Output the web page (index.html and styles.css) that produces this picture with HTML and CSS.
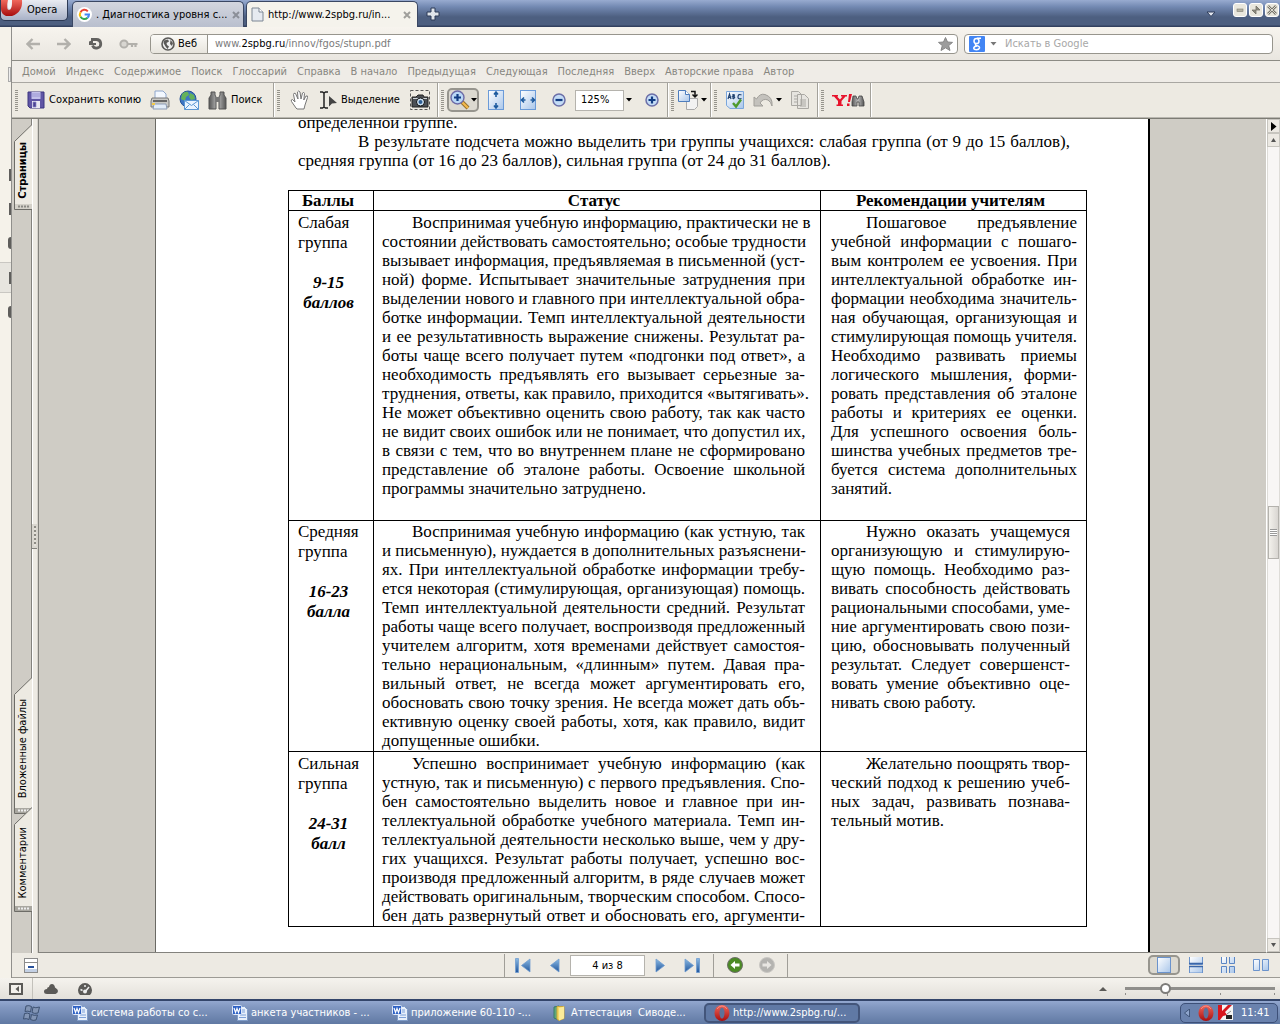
FILE: index.html
```html
<!DOCTYPE html>
<html lang="ru">
<head>
<meta charset="utf-8">
<meta name="viewport" content="width=device-width, initial-scale=1">
<title>http://www.2spbg.ru/innov/fgos/stupn.pdf</title>
<link rel="stylesheet" href="styles.css">
</head>
<body>
<svg class="defs" aria-hidden="true">
  <defs>
    <linearGradient id="gBlue" x1="0" y1="0" x2="1" y2="1"><stop offset="0" stop-color="#fff"/><stop offset="1" stop-color="#a9c6ea"/></linearGradient>
    <linearGradient id="gNav" x1="0" y1="0" x2="0" y2="1"><stop offset="0" stop-color="#8cbbe4"/><stop offset="1" stop-color="#1f549b"/></linearGradient>
    <linearGradient id="gGrey" x1="0" y1="0" x2="1" y2="0"><stop offset="0" stop-color="#555"/><stop offset=".5" stop-color="#bbb"/><stop offset="1" stop-color="#555"/></linearGradient>
    <linearGradient id="gRed" x1="0" y1="0" x2="0" y2="1"><stop offset="0" stop-color="#f0685c"/><stop offset="1" stop-color="#a80d0d"/></linearGradient>
    <symbol id="word" viewBox="0 0 16 16"><path d="M5.500 1.500h7l3 3v11h-10z" fill="#e8f0fb" stroke="#7f9cc8"/><path d="M8 5h5M8 7h5M8 10h6M7 12.500h7" stroke="#7da0d8"/><rect x=".5" y=".5" width="9" height="9" rx="1" fill="#2f62c4" stroke="#dfe9fa"/><path d="M2 3l1.500 4.500L5 3.500l1.500 4L8 3" fill="none" stroke="#fff" stroke-width="1.200"/></symbol>
    <symbol id="opera" viewBox="0 0 16 16"><ellipse cx="8" cy="8" rx="7.500" ry="8" fill="url(#gRed)"/><ellipse cx="8" cy="8" rx="2.500" ry="5.500" fill="#5d7199"/><path d="M3 4q2-3 5-3t5 3" stroke="#ff9a90" fill="none" opacity=".7"/></symbol>
    <symbol id="caret" viewBox="0 0 6 4"><path d="M0 0h6L3 3.500z" fill="currentColor"/></symbol>
  </defs>
</svg>
<div class="app">
  <header class="titlebar">
    <button class="opera-btn" type="button">
      <svg width="22" height="16" viewBox="0 0 22 16"><path d="M0 0h7q-2 10 1 10T11 0h10q1 12-10 16H5Q0 14 0 9z" fill="url(#gRed)"/><path d="M7 0q-1 9 1.500 9T11 0z" fill="#f4f4f6"/></svg>
      <span>Opera</span>
    </button>
    <div class="tab">
      <svg width="15" height="15" viewBox="0 0 15 15"><circle cx="7.500" cy="7.500" r="7.500" fill="#fff"/><g fill="none" stroke-width="2"><path d="M3.500 5.200A4.500 4.500 0 0 1 10.800 4.300" stroke="#ea4335"/><path d="M3.500 5.200a4.500 4.500 0 0 0 0 4.600" stroke="#fbbc05"/><path d="M3.500 9.800a4.500 4.500 0 0 0 7 1" stroke="#34a853"/><path d="M10.500 10.800Q12 9.500 12 7.600H7.600" stroke="#4285f4"/></g></svg>
      <a class="tab-text" href="#">. Диагностика уровня с...</a>
      <button class="tab-close" type="button" aria-label="Закрыть вкладку"><svg width="8" height="8" viewBox="0 0 8 8"><path d="M1 1l6 6M7 1L1 7" stroke="#8b8f98" stroke-width="2"/></svg></button>
    </div>
    <div class="tab tab-active">
      <svg width="13" height="15" viewBox="0 0 13 15"><path d="M1 1h7l4 4v9H1z" fill="#e6eaf0" stroke="#7d8794"/><path d="M8 1v4h4" fill="#fff" stroke="#7d8794"/></svg>
      <a class="tab-text" href="#">http://www.2spbg.ru/in...</a>
      <button class="tab-close" type="button" aria-label="Закрыть вкладку"><svg width="8" height="8" viewBox="0 0 8 8"><path d="M1 1l6 6M7 1L1 7" stroke="#a09f9b" stroke-width="2"/></svg></button>
    </div>
    <button class="plain new-tab" type="button" aria-label="Новая вкладка"><svg width="14" height="14" viewBox="0 0 14 14"><path d="M5 1h4v4h4v4H9v4H5V9H1V5h4z" fill="#dfe4ea" stroke="#2d3b56"/></svg></button>
    <button class="plain tab-menu" type="button" aria-label="Список вкладок"><svg width="10" height="7" viewBox="0 0 10 7"><path d="M1 1h8L5 5.500z" fill="#e3e7ef" stroke="#2f3d5a"/></svg></button>
    <div class="win-buttons">
      <button type="button" aria-label="Свернуть"><svg width="12" height="12" viewBox="0 0 12 12"><rect x="3" y="5" width="6" height="2.500" fill="#b5b3a4" stroke="#7e7c70" stroke-width=".6"/></svg></button>
      <button type="button" aria-label="Восстановить"><svg width="12" height="12" viewBox="0 0 12 12"><path d="M6 2v4h4zM6 10V6H2zM6 2l4 4M2 6l4 4" fill="#8d8b7e" stroke="#77756b" stroke-width=".8"/></svg></button>
      <button type="button" aria-label="Закрыть"><svg width="12" height="12" viewBox="0 0 12 12"><path d="M2 2l8 8M10 2l-8 8" stroke="#77756b" stroke-width="2.600"/><path d="M2 2l8 8M10 2l-8 8" stroke="#dcdad0"/></svg></button>
    </div>
  </header>

  <div class="middle">
    <aside class="sliver">
      <i class="nub nub-first"></i><i class="nub"></i><i class="nub"></i><i class="nub round"></i><span class="sliver-sel"><i class="nub"></i></span><i class="nub round"></i>
    </aside>
    <main class="window">
      <nav class="navbar">
        <button class="plain" type="button" aria-label="Назад"><svg width="14" height="12" viewBox="0 0 14 12"><path d="M6.500 1L1.500 6l5 5M2 6h12" fill="none" stroke="#b2b0ab" stroke-width="2.400"/></svg></button>
        <button class="plain" type="button" aria-label="Вперёд"><svg width="14" height="12" viewBox="0 0 14 12"><path d="M7.500 1l5 5-5 5M12 6H0" fill="none" stroke="#b2b0ab" stroke-width="2.400"/></svg></button>
        <button class="plain reload" type="button" aria-label="Обновить"><svg width="14" height="14" viewBox="0 0 14 14"><path d="M2 2.500h5.500a4.300 4.300 0 1 1-4 6" fill="none" stroke="#636260" stroke-width="2.800"/><path d="M0 8V4.500L4 3v3h3v2z" fill="#636260"/></svg></button>
        <button class="plain key" type="button" aria-label="Пароли"><svg width="19" height="10" viewBox="0 0 19 10"><circle cx="5" cy="5" r="3.600" fill="#d8d6d1" stroke="#b2b0ab" stroke-width="2"/><path d="M9 5h9.500M13 5v3M16.500 5v3" stroke="#b2b0ab" stroke-width="2.200" fill="none"/></svg></button>
        <div class="address">
          <button class="badge" type="button"><svg width="14" height="14" viewBox="0 0 14 14"><circle cx="7" cy="7" r="6" fill="#eee" stroke="#5a5957" stroke-width="1.600"/><path d="M3 3.500L7 2.500l1 2L5.500 6 6 8l2 1.500L6.500 12 4.500 9.500 2.500 6zM9.500 3l2.500 3-1 3-2-2z" fill="#5a5957"/></svg><span>Веб</span></button>
          <div class="url" role="textbox" contenteditable="true" aria-label="Адрес" spellcheck="false">www.<b>2spbg.ru</b>/innov/fgos/stupn.pdf</div>
          <button class="plain star" type="button" aria-label="Закладка"><svg width="15" height="14" viewBox="0 0 15 14"><path d="M7.500.5l2 4.500 5 .4-3.800 3.200L12 13.500l-4.500-2.700L3 13.500l1.300-4.900L.5 5.400l5-.4z" fill="#9c9c9c" stroke="#858585"/></svg></button>
        </div>
        <div class="search">
          <svg width="16" height="16" viewBox="0 0 16 16"><rect width="16" height="16" rx="1" fill="#4285f4"/><g fill="none" stroke="#fff" stroke-width="1.500"><ellipse cx="7.500" cy="5" rx="2.500" ry="2.600"/><path d="M8 2.300h4M7 7.600q-1.500 1.400 1 2 2.800.8 2.500 2.400-.5 1.700-3 1.700t-2.800-1.600Q5 10.300 8 10"/></g></svg>
          <svg class="search-caret" width="7" height="4"><use href="#caret"/></svg>
          <input type="text" aria-label="Искать в Google" placeholder="Искать в Google">
        </div>
      </nav>

      <nav class="links">
        <a href="#">Домой</a><a href="#">Индекс</a><a href="#">Содержимое</a><a href="#">Поиск</a><a href="#">Глоссарий</a><a href="#">Справка</a><a href="#">В начало</a><a href="#">Предыдущая</a><a href="#">Следующая</a><a href="#">Последняя</a><a href="#">Вверх</a><a href="#">Авторские права</a><a href="#">Автор</a>
      </nav>

      <div class="toolbar">
        <div class="group g-file">
          <button class="tool" type="button"><svg width="18" height="18" viewBox="0 0 18 18"><path d="M1 1h16v16H3l-2-2z" fill="#5f55a5" stroke="#3d3680"/><path d="M4.500 1h9v7h-9z" fill="#c3c0ea"/><path d="M5 10h8v7H5z" fill="#e8e8f2"/><path d="M6 11h3v5H6zM5 3h8M5 5h8" fill="#4a4292" stroke="#8a85c8" stroke-width=".7"/></svg><span>Сохранить копию</span></button>
          <button class="tool" type="button" aria-label="Печать"><svg width="20" height="20" viewBox="0 0 20 20"><path d="M5 8V1h8l3 3v4" fill="#f3f8ff" stroke="#8ea6cc"/><path d="M2 8h16l1 3v6H1v-6z" fill="#c9c9c6" stroke="#777"/><path d="M3 10h14v2H3z" fill="#666"/><path d="M4 14h12l1 5H3z" fill="#e2ecf8" stroke="#8d9cb5"/><path d="M2 13h3v2H2z" fill="#f3c94a"/></svg></button>
          <button class="tool" type="button" aria-label="Отправить"><svg width="20" height="20" viewBox="0 0 20 20"><circle cx="9" cy="9" r="8" fill="#3d75c4" stroke="#265296"/><path d="M3 4q3-3 6-2l1 3-3 2-1 4-4-2zM11 3l4 2 1 4-4 1-2-3z" fill="#64b25a"/><path d="M5.500 10.500h14v9h-14z" fill="#eaf4ff" stroke="#5c97d3"/><path d="M5.500 10.500l7 5 7-5M5.500 19.500l5-5M19.500 19.500l-5-5" fill="none" stroke="#5c97d3"/></svg></button>
          <button class="tool" type="button"><svg width="19" height="19" viewBox="0 0 19 19"><path d="M3 1h4v3l1 2v12H1V7l2-3zM12 1h4v3l2 3v11h-7V6l1-2z" fill="url(#gGrey)" stroke="#555"/><path d="M8 6h3v5H8z" fill="#777"/></svg><span>Поиск</span></button>
        </div>
        <div class="group g-select">
          <button class="tool" type="button" aria-label="Рука"><svg width="19" height="20" viewBox="0 0 19 20"><path d="M6 18L1.500 11.500q-1-2 1-2L5 12 3.500 4.500q0-2 2-1L8 9 7.500 2q1-2 2.500 0l1 7 1.500-6q1.500-1.500 2 .5L13.800 10l2.200-4q2-.8 1.500 1.500L15 15l-1 4H7z" fill="#fff" stroke="#777"/></svg></button>
          <button class="tool" type="button"><svg width="18" height="18" viewBox="0 0 18 18"><path d="M1 1h2.500l1.500 1 1.500-1H9M5 2v14M1 17h2.500L5 16l1.500 1H9" fill="none" stroke="#222" stroke-width="1.500"/><path d="M10 5l8 7-5 .500-3 3z" fill="#444"/></svg><span>Выделение</span></button>
          <button class="tool" type="button" aria-label="Снимок"><svg width="20" height="20" viewBox="0 0 20 20"><rect x=".5" y=".5" width="19" height="19" fill="none" stroke="#555" stroke-dasharray="3 2"/><path d="M2 7h4l2-2h5l1 2h4v10H2z" fill="#4b4f55" stroke="#222"/><path d="M3 8h14v1H3z" fill="#cdd3da"/><circle cx="10.500" cy="12" r="4" fill="#cfe3f5" stroke="#111"/><circle cx="10.500" cy="12" r="2" fill="#2f5f94"/></svg></button>
        </div>
        <div class="group g-zoom">
          <button class="tool pressed" type="button" aria-label="Увеличение"><svg width="20" height="20" viewBox="0 0 20 20"><path d="M12 12l6 6" stroke="#8d6a28" stroke-width="4"/><path d="M12 12l6 6" stroke="#f2b84c" stroke-width="2.400"/><circle cx="7.500" cy="7.500" r="6.500" fill="#b9d7f5" stroke="#6c6aa6" stroke-width="1.400"/><path d="M7.500 4v7M4 7.500h7" stroke="#123c83" stroke-width="2.200"/></svg><svg width="6" height="4"><use href="#caret"/></svg></button>
          <button class="tool" type="button" aria-label="По высоте"><svg width="16" height="20" viewBox="0 0 16 20"><rect x=".5" y=".5" width="15" height="19" fill="url(#gBlue)" stroke="#6b9bd8"/><path d="M8 2v5M8 18v-5M6 4.500l2-2.500 2 2.500M6 15.500L8 18l2-2.500" fill="none" stroke="#1d5a9e" stroke-width="1.600"/></svg></button>
          <button class="tool" type="button" aria-label="По ширине"><svg width="16" height="20" viewBox="0 0 16 20"><rect x=".5" y=".5" width="15" height="19" fill="url(#gBlue)" stroke="#6b9bd8"/><path d="M1.500 10h4M14.500 10h-4M4 7.500L1.500 10 4 12.500M12 7.500l2.500 2.500-2.500 2.500" fill="none" stroke="#1d5a9e" stroke-width="1.600"/></svg></button>
          <button class="tool" type="button" aria-label="Уменьшить"><svg width="14" height="14" viewBox="0 0 14 14"><circle cx="7" cy="7" r="6" fill="#c4dcf6" stroke="#6c6fa8" stroke-width="1.500"/><path d="M3.500 7h7" stroke="#123c83" stroke-width="2.200"/></svg></button>
          <div class="zoom-box"><input type="text" value="125%" aria-label="Масштаб"><button class="plain" type="button" aria-label="Выбрать масштаб"><svg width="6" height="4"><use href="#caret"/></svg></button></div>
          <button class="tool" type="button" aria-label="Увеличить"><svg width="14" height="14" viewBox="0 0 14 14"><circle cx="7" cy="7" r="6" fill="#c4dcf6" stroke="#6c6fa8" stroke-width="1.500"/><path d="M3.500 7h7M7 3.500v7" stroke="#123c83" stroke-width="2.200"/></svg></button>
        </div>
        <div class="group g-rotate">
          <button class="tool" type="button" aria-label="Повернуть"><svg width="20" height="20" viewBox="0 0 20 20"><path d="M8.500 8.500h11v8l-3 3h-8z" fill="#f2f2f2" stroke="#aaa"/><path d="M.5.500h7l4 4v7H.5z" fill="url(#gBlue)" stroke="#4d7dbd"/><path d="M7.500.5v4h4" fill="#fff" stroke="#4d7dbd"/><path d="M13 1.500h4V6M14.500 4.500L17 7l2.500-2.500" fill="none" stroke="#111" stroke-width="1.500"/></svg><svg width="6" height="4"><use href="#caret"/></svg></button>
        </div>
        <div class="group g-edit">
          <button class="tool" type="button" aria-label="Орфография"><svg width="18" height="18" viewBox="0 0 18 18"><path d="M.5.500h17v17H4l-3.500-3z" fill="url(#gBlue)" stroke="#7aa6dc"/><path d="M2 8l1.500-5L5 8M2.500 6.500h2M7 3v5M7 3.500q3 0 0 2 3.500 0 0 2.500M15.500 4q-3-1.500-3.500 1.500T15.500 7.500" fill="none" stroke="#1f416f" stroke-width="1.200"/><path d="M7 12l3 3.500 5-7" fill="none" stroke="#4f9a2c" stroke-width="2.400"/></svg></button>
          <button class="tool" type="button" aria-label="Отменить"><svg width="20" height="14" viewBox="0 0 20 14"><path d="M1 4v9h9L7 10q3-5 8-3 3 2 4 6 1-9-7-11.500Q7 0 3.500 6z" fill="#c4c2bd" stroke="#a19f9a"/></svg><svg width="6" height="4"><use href="#caret"/></svg></button>
          <button class="tool" type="button" aria-label="Копировать"><svg width="18" height="18" viewBox="0 0 18 18"><path d="M.5.500h7l3 3v11H.5zM6.500 3.500h7l4 4v10h-11z" fill="#e6e4df" stroke="#aaa8a3"/><path d="M3 5h3M3 8h3M3 11h3M9 9h6M9 11h6M9 13h6M9 15h6" stroke="#aaa8a3"/></svg></button>
        </div>
        <div class="group g-yahoo">
          <button class="tool" type="button" aria-label="Yahoo"><svg width="33" height="13" viewBox="0 0 33 13"><path d="M0 1h6v1.500H5L8 5.500l2.500-3H9V1h6v1.500h-1.500L9.500 7v3.500H11V12H4.500v-1.500H6V7L2 2.500H0zM17 0h3l-2 8h-2zM15 9.500h2.500V12H15z" fill="#e8132c"/><path d="M21 2h3l1 3h1l1-3h3l2 6v4h-5V8h-2v4h-5V8z" fill="url(#gGrey)" stroke="#444" stroke-width=".8"/></svg></button>
        </div>
      </div>

      <div class="viewer">
        <div class="rail">
          <button class="rail-tab rail-pages" type="button"><svg width="18" height="87" viewBox="0 0 18 87"><path d="M18 .5L.5 17.500V85.500H18" fill="#edeae2" stroke="#6d6c67"/><path d="M1 80h17v5H1z" fill="#d4d1c9"/><path d="M4 82.500h11" stroke="#8a8984" stroke-width="2" stroke-dasharray="2 1"/></svg><span>Страницы</span></button>
          <button class="rail-tab rail-files" type="button"><svg width="18" height="138" viewBox="0 0 18 138"><path d="M18 .5L.5 17.500V136.500H18" fill="#edeae2" stroke="#6d6c67"/><path d="M1 131h17v5H1z" fill="#a9a7a0"/><path d="M4 133.500h11" stroke="#eee" stroke-width="2" stroke-dasharray="2 1"/></svg><span>Вложенные файлы</span></button>
          <button class="rail-tab rail-comments" type="button"><svg width="18" height="106" viewBox="0 0 18 106"><path d="M18 .5L.5 17.500V104.500H18" fill="#edeae2" stroke="#6d6c67"/><path d="M1 99h17v5H1z" fill="#a9a7a0"/><path d="M4 101.500h11" stroke="#eee" stroke-width="2" stroke-dasharray="2 1"/></svg><span>Комментарии</span></button>
        </div>
        <div class="splitter"><i></i></div>
        <div class="canvas">
          <article class="page">
            <div class="intro">
              <p class="lines"><span>определенной группе.</span></p>
              <p class="lines"><span class="ind">В результате подсчета можно выделить три группы учащихся: слабая группа (от 9 до 15 баллов),</span><span>средняя группа (от 16 до 23 баллов), сильная группа (от 24 до 31 баллов).</span></p>
            </div>
            <table>
              <thead><tr><th class="c1">Баллы</th><th class="c2">Статус</th><th class="c3">Рекомендации учителям</th></tr></thead>
              <tbody>
                <tr class="r1">
                  <td class="c1"><p>Слабая<br>группа</p><p class="score">9-15<br>баллов</p></td>
                  <td class="c2"><p class="lines"><span class="ind">Воспринимая учебную информацию, практически не в</span><span>состоянии действовать самостоятельно; особые трудности</span><span>вызывает информация, предъявляемая в письменной (уст-</span><span>ной) форме. Испытывает значительные затруднения при</span><span>выделении нового и главного при интеллектуальной обра-</span><span>ботке информации. Темп интеллектуальной деятельности</span><span>и ее результативность выражение снижены. Результат ра-</span><span>боты чаще всего получает путем «подгонки под ответ», а</span><span>необходимость предъявлять его вызывает серьезные за-</span><span>труднения, ответы, как правило, приходится «вытягивать».</span><span>Не может объективно оценить свою работу, так как часто</span><span>не видит своих ошибок или не понимает, что допустил их,</span><span>в связи с тем, что во внутреннем плане не сформировано</span><span>представление об эталоне работы. Освоение школьной</span><span>программы значительно затруднено.</span></p></td>
                  <td class="c3 wide"><p class="lines"><span class="ind">Пошаговое предъявление</span><span>учебной информации с пошаго-</span><span>вым контролем ее усвоения. При</span><span>интеллектуальной обработке ин-</span><span>формации необходима значитель-</span><span>ная обучающая, организующая и</span><span>стимулирующая помощь учителя.</span><span>Необходимо развивать приемы</span><span>логического мышления, форми-</span><span>ровать представления об эталоне</span><span>работы и критериях ее оценки.</span><span>Для успешного освоения боль-</span><span>шинства учебных предметов тре-</span><span>буется система дополнительных</span><span>занятий.</span></p></td>
                </tr>
                <tr class="r2">
                  <td class="c1"><p>Средняя<br>группа</p><p class="score">16-23<br>балла</p></td>
                  <td class="c2"><p class="lines"><span class="ind">Воспринимая учебную информацию (как устную, так</span><span>и письменную), нуждается в дополнительных разъяснени-</span><span>ях. При интеллектуальной обработке информации требу-</span><span>ется некоторая (стимулирующая, организующая) помощь.</span><span>Темп интеллектуальной деятельности средний. Результат</span><span>работы чаще всего получает, воспроизводя предложенный</span><span>учителем алгоритм, хотя временами действует самостоя-</span><span>тельно нерациональным, «длинным» путем. Давая пра-</span><span>вильный ответ, не всегда может аргументировать его,</span><span>обосновать свою точку зрения. Не всегда может дать объ-</span><span>ективную оценку своей работы, хотя, как правило, видит</span><span>допущенные ошибки.</span></p></td>
                  <td class="c3"><p class="lines"><span class="ind">Нужно оказать учащемуся</span><span>организующую и стимулирую-</span><span>щую помощь. Необходимо раз-</span><span>вивать способность действовать</span><span>рациональными способами, уме-</span><span>ние аргументировать свою пози-</span><span>цию, обосновывать полученный</span><span>результат. Следует совершенст-</span><span>вовать умение объективно оце-</span><span>нивать свою работу.</span></p></td>
                </tr>
                <tr class="r3">
                  <td class="c1"><p>Сильная<br>группа</p><p class="score">24-31<br>балл</p></td>
                  <td class="c2"><p class="lines cut"><span class="ind">Успешно воспринимает учебную информацию (как</span><span>устную, так и письменную) с первого предъявления. Спо-</span><span>бен самостоятельно выделить новое и главное при ин-</span><span>теллектуальной обработке учебного материала. Темп ин-</span><span>теллектуальной деятельности несколько выше, чем у дру-</span><span>гих учащихся. Результат работы получает, успешно вос-</span><span>производя предложенный алгоритм, в ряде случаев может</span><span>действовать оригинальным, творческим способом. Спосо-</span><span>бен дать развернутый ответ и обосновать его, аргументи-</span></p></td>
                  <td class="c3"><p class="lines"><span class="ind">Желательно поощрять твор-</span><span>ческий подход к решению учеб-</span><span>ных задач, развивать познава-</span><span>тельный мотив.</span></p></td>
                </tr>
              </tbody>
            </table>
          </article>
        </div>
        <div class="scrollbar">
          <button class="panel-arrow" type="button" aria-label="Открыть панель"><svg width="6" height="9" viewBox="0 0 6 9"><path d="M0 0l5.500 4.500L0 9z"/></svg></button>
          <button class="sb-arrow" type="button" aria-label="Вверх"><svg width="5" height="4" viewBox="0 0 5 4"><path d="M0 4l2.500-4L5 4z" fill="#555"/></svg></button>
          <div class="track"><div class="thumb"><i></i></div></div>
          <button class="sb-arrow" type="button" aria-label="Вниз"><svg width="5" height="4" viewBox="0 0 5 4"><path d="M0 0h5L2.500 4z" fill="#555"/></svg></button>
        </div>
      </div>

      <div class="pager">
        <button class="plain hide-panel" type="button" aria-label="Скрыть панель"><svg width="14" height="15" viewBox="0 0 14 15"><rect x=".5" y=".5" width="13" height="14" fill="#fff" stroke="#8b8b8b"/><path d="M1 4.500h12" stroke="#8b8b8b"/><path d="M1 11h12v3H1z" fill="#c3d0e4"/><path d="M4 9h6" stroke="#27509b" stroke-width="2"/></svg></button>
        <div class="pager-nav">
          <button class="plain" type="button" aria-label="Первая"><svg width="16" height="15" viewBox="0 0 16 15"><path d="M.5.500h3v14h-3zM15 1v13L6.500 7.500z" fill="url(#gNav)" stroke="#6f9cd0" stroke-width=".8"/></svg></button>
          <button class="plain" type="button" aria-label="Предыдущая"><svg width="10" height="15" viewBox="0 0 10 15"><path d="M9 1v13L.5 7.500z" fill="url(#gNav)" stroke="#6f9cd0" stroke-width=".8"/></svg></button>
          <input type="text" value="4 из 8" aria-label="Страница">
          <button class="plain" type="button" aria-label="Следующая"><svg width="10" height="15" viewBox="0 0 10 15"><path d="M1 1v13l8.500-6.500z" fill="url(#gNav)" stroke="#6f9cd0" stroke-width=".8"/></svg></button>
          <button class="plain" type="button" aria-label="Последняя"><svg width="16" height="15" viewBox="0 0 16 15"><path d="M12.500.500h3v14h-3zM1 1v13l8.500-6.500z" fill="url(#gNav)" stroke="#6f9cd0" stroke-width=".8"/></svg></button>
        </div>
        <div class="pager-hist">
          <button class="plain" type="button" aria-label="Предыдущий вид"><svg width="16" height="16" viewBox="0 0 16 16"><circle cx="8" cy="8" r="7.500" fill="#4b8a24" stroke="#6e6f6a"/><path d="M3.500 8L8 4v2.500h4.500v3H8V12z" fill="#fff"/></svg></button>
          <button class="plain" type="button" aria-label="Следующий вид"><svg width="16" height="16" viewBox="0 0 16 16"><circle cx="8" cy="8" r="7.500" fill="#b4b3b0" stroke="#c9c7c3"/><path d="M12.500 8L8 4v2.500H3.500v3H8V12z" fill="#e8e6e2"/></svg></button>
        </div>
        <div class="layouts">
          <button class="plain pressed" type="button" aria-label="Одна страница"><svg width="14" height="16" viewBox="0 0 14 16"><rect x=".5" y=".5" width="13" height="15" fill="url(#gBlue)" stroke="#6b93cc"/></svg></button>
          <button class="plain" type="button" aria-label="Непрерывно"><svg width="14" height="16" viewBox="0 0 14 16"><path d="M.5 0v7.500h13V0M.5 16V9.500h13V16z" fill="url(#gBlue)" stroke="#6b93cc"/><path d="M0 6.500h14M0 9.500h14" stroke="#3a66a8" stroke-width="1.500"/></svg></button>
          <button class="plain" type="button" aria-label="Непрерывно — разворот"><svg width="14" height="16" viewBox="0 0 14 16"><path d="M.5 0v6.500h5V0M8.500 0v6.500h5V0M.5 16V9.500h5V16M8.500 16V9.500h5V16" fill="url(#gBlue)" stroke="#5b86c4"/></svg></button>
          <button class="plain" type="button" aria-label="Разворот"><svg width="16" height="12" viewBox="0 0 16 12"><path d="M.5.500h6v11h-6zM9.500.500h6v11h-6z" fill="url(#gBlue)" stroke="#6b93cc"/></svg></button>
        </div>
      </div>
    </main>
  </div>

  <footer class="status">
    <button class="plain status-panel" type="button" aria-label="Панели"><svg width="14" height="12" viewBox="0 0 14 12"><rect x="1" y="1" width="12" height="10" fill="#f3f1ec" stroke="#5b5a57" stroke-width="2"/><path d="M10 3v6L6.500 6z" fill="#5b5a57"/></svg></button>
    <button class="plain" type="button" aria-label="Link"><svg width="14" height="10" viewBox="0 0 14 10"><path d="M3 10Q0 10 0 7.500T3 5q0-2 2-2 .5-3 3-3t3 3.500Q14 5 14 7t-2.500 3z" fill="#5b5a57"/></svg></button>
    <button class="plain" type="button" aria-label="Turbo"><svg width="14" height="12" viewBox="0 0 14 12"><path d="M2 12a7 7 0 1 1 10 0z" fill="#5b5a57"/><path d="M7 9l4-5M2.500 6.500l2 1M7 2v2" stroke="#eee" stroke-width="1.500"/><circle cx="7" cy="8.500" r="2" fill="#eee"/></svg></button>
    <button class="plain zoom-up" type="button" aria-label="Масштаб страницы"><svg width="8" height="4" viewBox="0 0 8 4"><path d="M0 4l4-4 4 4z" fill="#5b5a57"/></svg></button>
    <input class="zoom-range" type="range" min="0" max="100" value="25" aria-label="Масштаб">
  </footer>

  <footer class="taskbar">
    <button class="start" type="button" aria-label="Пуск"><svg width="18" height="16" viewBox="0 0 18 16"><g fill="#8295b5" stroke="#3e5272"><path d="M3 1q3-1 5.500.5L7.500 7Q5 5.500 2 6.500zM10 2q2.500 1.500 6.500 0l-1.500 6q-3.500 1-6-.5zM1.500 8.500q3-1 5.500.5l-1 5.500Q3.500 13 .5 14zM8.500 9.500q2.500 1.500 6 .5l-1.500 5q-3 1-5.500-.500z"/></g></svg></button>
    <button class="task" type="button"><svg width="16" height="16"><use href="#word"/></svg><span>система работы со с...</span></button>
    <button class="task" type="button"><svg width="16" height="16"><use href="#word"/></svg><span>анкета участников - ...</span></button>
    <button class="task" type="button"><svg width="16" height="16"><use href="#word"/></svg><span>приложение 60-110 -...</span></button>
    <button class="task" type="button"><svg width="16" height="16" viewBox="0 0 16 16"><path d="M2 2l5-1v14l-5-2z" fill="#5fa87a" stroke="#3a7a66"/><path d="M5 1.500h7v12l-5 2-2-1.500z" fill="#f3d965" stroke="#c9a53a"/><path d="M7 3l5-1.500v12L7 15.500z" fill="#fbeb99"/></svg><span>Аттестация&nbsp; Сиводе...</span></button>
    <button class="task task-active" type="button"><svg width="16" height="16"><use href="#opera"/></svg><span>http://www.2spbg.ru/...</span></button>
    <div class="tray">
      <svg width="6" height="8" viewBox="0 0 6 8"><path d="M5.500 0v8L.5 4z" fill="#8ea4cc" stroke="#33476b" stroke-width=".8"/></svg>
      <svg class="tray-opera" width="16" height="16"><use href="#opera"/></svg>
      <svg width="15" height="15" viewBox="0 0 15 15"><path d="M0 0h15v15H0z" fill="#f4f4f4"/><path d="M0 0h4v6l6-6h4L7 7l2 3-4 1-3 4H0z" fill="#d8161e"/><path d="M8 10h6v4H8z" fill="#222"/><path d="M9 9l4-3" stroke="#888"/></svg>
      <time>11:41</time>
    </div>
  </footer>
</div>
</body>
</html>
```
FILE: styles.css
```css
* { box-sizing: border-box; }

body {
  margin: 0;
  font: 11px/14px "DejaVu Sans Condensed", "DejaVu Sans", sans-serif;
  color: #000;
  background: #f4f1ea;
}

button, input {
  font: inherit;
  color: inherit;
  margin: 0;
  padding: 0;
}

svg { display: block; flex: none; }
p { margin: 0; }
a { color: inherit; text-decoration: none; }
.defs { position: absolute; width: 0; height: 0; }

.plain {
  display: flex;
  align-items: center;
  justify-content: center;
  border: 0;
  background: none;
}

.app {
  display: flex;
  flex-direction: column;
  height: 100vh;
  overflow: hidden;
}

/* Title bar */
.titlebar {
  display: flex;
  flex: none;
  height: 27px;
  align-items: flex-end;
  background: linear-gradient(#98abd0, #7288b1 7px, #4d5f80 17px, #4d5f80 25px, #33415f 26px);
}

.opera-btn {
  display: flex;
  align-self: flex-start;
  align-items: center;
  gap: 4px;
  width: 68px;
  height: 21px;
  margin-right: 4px;
  border: 1px solid #2d3a55;
  border-top: 0;
  border-radius: 0 0 5px 5px;
  background: linear-gradient(#e9ebf2, #a9b2c7);
}
.opera-btn svg { align-self: flex-start; }

.tab {
  display: flex;
  align-items: center;
  gap: 4px;
  width: 172px;
  height: 26px;
  margin-right: 2px;
  padding: 0 4px;
  border: 1px solid #3a4763;
  border-bottom: 0;
  border-radius: 5px 5px 0 0;
  background: linear-gradient(#d3d6df, #b9bfce);
}
.tab-active { background: #f5f3ec; }
.tab-text {
  flex: 1;
  white-space: nowrap;
}
.tab-close {
  display: flex;
  width: 12px;
  height: 12px;
  align-items: center;
  justify-content: center;
  border: 0;
  background: none;
}
.new-tab { width: 26px; height: 26px; }
.tab-menu { width: 24px; height: 26px; margin-left: auto; }

.win-buttons {
  display: flex;
  align-self: flex-start;
  gap: 2px;
  padding: 3px 1px 0 10px;
}
.win-buttons button {
  display: flex;
  width: 14px;
  height: 14px;
  align-items: center;
  justify-content: center;
  border: 1px solid #fff;
  border-radius: 3px;
  background: #e9e7dd;
}

/* Middle area */
.middle { display: flex; flex: 1; min-height: 0; }

.sliver {
  display: flex;
  flex: none;
  flex-direction: column;
  align-items: flex-end;
  gap: 22px;
  width: 11px;
  padding-top: 40px;
  background: #f5f2ea;
}
.nub { width: 2px; height: 12px; background: #5f5e5c; }
.nub-first { width: 3px; height: 15px; margin-bottom: 65px; border: 1px solid #aaa; background: #eee; }
.round { width: 3px; border-radius: 6px 0 0 6px; }
.sliver-sel {
  display: flex;
  width: 100%;
  height: 31px;
  margin: -9px 0;
  align-items: center;
  justify-content: flex-end;
  border: solid #c9c7c2;
  border-width: 1px 0;
  background: #e7e5df;
}

.window {
  display: flex;
  flex: 1;
  flex-direction: column;
  min-width: 0;
  border-left: 1px solid #908f8c;
  background: #edeae3;
}

.navbar {
  display: flex;
  flex: none;
  height: 34px;
  align-items: center;
  padding: 0 7px 0 5px;
  border-bottom: 1px solid #8c8b85;
  background: linear-gradient(#f7f4ee, #e9e6e0);
}
.navbar > .plain { width: 31px; height: 24px; }
.navbar > .reload { width: 34px; }
.navbar > .key { width: 30px; margin-right: 7px; }

.address, .search {
  display: flex;
  height: 20px;
  align-items: center;
  border: 1px solid #97958d;
  border-radius: 4px;
  background: #fff;
}
.address { flex: 1; margin-right: 6px; }
.badge {
  display: flex;
  align-self: stretch;
  align-items: center;
  gap: 3px;
  width: 57px;
  padding-left: 10px;
  border: 0;
  border-right: 1px solid #97958d;
  border-radius: 3px 0 0 3px;
  background: linear-gradient(#fbfaf7, #e8e5de);
}
.url {
  flex: 1;
  padding-left: 7px;
  color: #7b7b7b;
  outline: 0;
  white-space: nowrap;
}
.url b { color: #000; font-weight: normal; }
.star { width: 24px; }
.search { width: 309px; padding-left: 4px; }
.search-caret { margin: 0 8px 0 5px; color: #777; }
.search input { flex: 1; min-width: 0; border: 0; outline: 0; background: none; }
.search input::placeholder { color: #a7a7a7; opacity: 1; }

.links {
  display: flex;
  flex: none;
  gap: 10px;
  height: 22px;
  align-items: center;
  padding-left: 10px;
  border-bottom: 1px solid #a9a7a2;
  background: #efece7;
  color: #87867f;
  white-space: nowrap;
}

/* Acrobat toolbar */
.toolbar {
  display: flex;
  flex: none;
  height: 36px;
  padding-bottom: 1px;
  border-bottom: 1px solid #7d7c74;
  box-shadow: inset 0 -1px #b9b7b0;
  background: #edeae2;
}
.group {
  display: flex;
  align-items: center;
  border-right: 1px solid #a3a19a;
  padding-left: 3px;
  box-shadow: 1px 0 #fff;
}
.group::before {
  content: "";
  width: 3px;
  height: 21px;
  flex: none;
  background: repeating-linear-gradient(#96948c 0 1px, transparent 1px 2px);
}
.tool {
  display: flex;
  flex: none;
  align-items: center;
  gap: 4px;
  border: 0;
  background: none;
  white-space: nowrap;
}
.g-file { width: 262px; }
.g-select { width: 164px; }
.g-zoom { width: 230px; }
.g-rotate { width: 43px; }
.g-edit { width: 107px; }
.g-yahoo { width: 53px; }
.g-file .tool { margin-left: 9px; }
.g-select .tool { margin-left: 10px; }
.g-zoom .tool { margin-left: 16px; }
.g-zoom .pressed {
  gap: 1px;
  width: 32px;
  height: 24px;
  margin: 0 -7px 0 3px;
  padding-left: 1px;
}
.pressed {
  border: 2px solid #97958e;
  border-radius: 5px;
  background: #dcd9d0;
}
.zoom-box { display: flex; height: 21px; margin: 0 -4px 0 9px; }
.zoom-box input {
  width: 49px;
  padding-left: 5px;
  border: 1px solid #b5b3ad;
  background: #fff;
}
.zoom-box button { width: 9px; }
.g-rotate .tool { gap: 3px; margin-left: 4px; }
.g-edit .tool { gap: 3px; margin-left: 9px; }
.g-yahoo .tool { margin-left: 8px; }

/* Viewer */
.viewer { display: flex; flex: 1; min-height: 0; background: #cfccc5; }

.rail {
  display: flex;
  flex: none;
  flex-direction: column;
  align-items: flex-end;
  width: 20px;
  padding: 5px 0 40px;
  border-right: 1px solid #83827d;
}
.rail-tab {
  display: grid;
  flex: none;
  width: 18px;
  border: 0;
  background: none;
  place-items: center;
  margin-right: -1px;
}
.rail-tab > * { grid-area: 1 / 1; }
.rail-tab span {
  writing-mode: vertical-rl;
  transform: rotate(180deg);
  white-space: nowrap;
  margin-top: 6px;
}
.rail-pages { font-weight: bold; }
.rail-files { margin-top: auto; }
.rail-comments { margin-top: -8px; }

.splitter {
  display: flex;
  flex: none;
  width: 7px;
  align-items: center;
  border-right: 1px solid #83827d;
  background: linear-gradient(90deg, #fff 1px, #edeae3 1px 5px, #d5d2cb 5px);
}
.splitter i {
  width: 5px;
  height: 25px;
  border-bottom: 1px solid #83827d;
  background: repeating-linear-gradient(#8d8b84 0 2px, #e4e1da 2px 4px) 2px 2px / 2px 20px no-repeat, #d9d6cf;
}

.canvas {
  display: flex;
  flex: 1;
  min-width: 0;
  justify-content: center;
  overflow: hidden;
  border-bottom: 1px solid #83827d;
}
.page {
  flex: none;
  width: 995px;
  padding-left: 132px;
  overflow: hidden;
  border-left: 1px solid #6a6964;
  border-right: 2px solid #000;
  background: #fff;
  font: 17px/19px "Liberation Serif", "Times New Roman", serif;
}
.intro {
  width: 782px;
  margin: -6px 0 20px;
  padding-left: 10px;
}

.lines span {
  display: block;
  white-space: nowrap;
  text-align: justify;
  text-align-last: justify;
}
.lines:not(.cut) span:last-child { text-align-last: left; }
.intro .ind { padding-left: 60px; }

table {
  width: 799px;
  border-collapse: collapse;
  table-layout: fixed;
}
th, td { border: 1px solid #000; vertical-align: top; padding: 0; }
th { height: 20px; padding-right: 6px; }
th.c1 { width: 85px; }
th.c2 { width: 447px; }
td.c1 { padding: 2px 14px 0 9px; line-height: 20px; }
td.c2 { padding: 2px 15px 0 8px; }
td.c3 { padding: 2px 16px 0 10px; }
td.wide { padding-right: 9px; }
.c2 .ind { padding-left: 30px; }
.c3 .ind { padding-left: 35px; }
.score {
  margin-top: 20px;
  font-weight: bold;
  font-style: italic;
  text-align: center;
}
.r1 { height: 310px; }
.r2 { height: 231px; }
.r2 td { padding-top: 1px; }
.r3 { height: 175px; }

.scrollbar {
  display: flex;
  flex: none;
  flex-direction: column;
  width: 14px;
  border-left: 1px solid #fff;
  border-bottom: 1px solid #83827d;
  background: #f8f6f5;
}
.panel-arrow, .sb-arrow {
  display: flex;
  flex: none;
  height: 14px;
  align-items: center;
  justify-content: center;
  border: 1px solid #c7c5bf;
  background: #ece9e3;
}
.track { flex: 1; padding-top: 359px; border: 1px solid #dedcd8; border-width: 0 1px; }
.thumb {
  display: flex;
  height: 53px;
  align-items: center;
  justify-content: center;
  border: 1px solid #b4b2ad;
  background: linear-gradient(90deg, #f3f1ec, #d9d6d2);
}
.thumb i { width: 7px; height: 7px; background: repeating-linear-gradient(#999 0 1px, #fff 1px 2px); }

/* Page navigation */
.pager {
  display: grid;
  flex: none;
  grid-template-columns: 1fr auto auto 1fr;
  height: 25px;
  align-items: center;
  border-bottom: 1px solid #9d9b95;
}
.hide-panel { justify-self: start; margin-left: 12px; }
.pager-nav, .pager-hist {
  display: flex;
  height: 23px;
  align-items: center;
  border-right: 1px solid #a09e98;
}
.pager-nav { gap: 10px; padding: 0 13px 0 10px; border-left: 1px solid #a09e98; }
.pager-nav button:first-child { margin-right: 9px; }
.pager-nav button:last-child { margin-left: 9px; }
.pager-nav input {
  width: 75px;
  height: 21px;
  border: 1px solid #b5b3ad;
  background: #fff;
  text-align: center;
}
.pager-hist { gap: 16px; padding: 0 12px 0 13px; }
.layouts { display: flex; justify-self: end; align-items: center; gap: 18px; padding-right: 11px; }
.layouts .pressed { width: 32px; height: 20px; margin-right: -9px; }

/* Browser status bar */
.status {
  display: flex;
  flex: none;
  height: 21px;
  align-items: center;
  gap: 20px;
  padding-right: 5px;
  background: linear-gradient(#f5f3ee, #e3e0da);
}
.status-panel { width: 33px; align-self: stretch; border-right: 1px solid #c3c1bb; margin-right: -9px; }
.zoom-up { margin-left: auto; margin-right: -2px; }
.zoom-range {
  width: 150px;
  height: 15px;
  appearance: none;
  background:
    linear-gradient(#8f8e8b, #8f8e8b) 0 6px / 100% 3px no-repeat,
    linear-gradient(#8f8e8b, #8f8e8b) 0 12px / 1px 2px no-repeat,
    linear-gradient(#8f8e8b, #8f8e8b) 42px 12px / 1px 3px no-repeat,
    linear-gradient(#8f8e8b, #8f8e8b) 95px 12px / 1px 2px no-repeat,
    linear-gradient(#8f8e8b, #8f8e8b) 149px 12px / 1px 2px no-repeat;
}
.zoom-range::-webkit-slider-thumb {
  appearance: none;
  width: 11px;
  height: 11px;
  border: 2px solid #7d7c79;
  border-radius: 50%;
  background: #fff;
}

/* Task bar */
.taskbar {
  display: flex;
  flex: none;
  height: 25px;
  align-items: center;
  padding-right: 2px;
  border-top: 2px solid #33456a;
  background: linear-gradient(#93a7cf, #8298c1 6px, #6079a3);
  color: #fff;
}
.start {
  display: flex;
  width: 64px;
  justify-content: center;
  border: 0;
  background: none;
}
.task {
  display: flex;
  width: 160px;
  height: 20px;
  align-items: center;
  gap: 3px;
  padding-left: 8px;
  border: 0;
  background: none;
  white-space: nowrap;
}
.task-active {
  width: 156px;
  border: 2px solid #43557a;
  border-radius: 5px;
  background: #6079a5;
}
.tray {
  display: flex;
  width: 98px;
  height: 20px;
  align-items: center;
  gap: 4px;
  margin-left: auto;
  padding-left: 3px;
  border: 1px solid #3d5078;
  border-radius: 5px;
  background: #6a82ae;
}
.tray-opera { margin-left: 4px; }
.tray time { margin-left: 4px; }
```
